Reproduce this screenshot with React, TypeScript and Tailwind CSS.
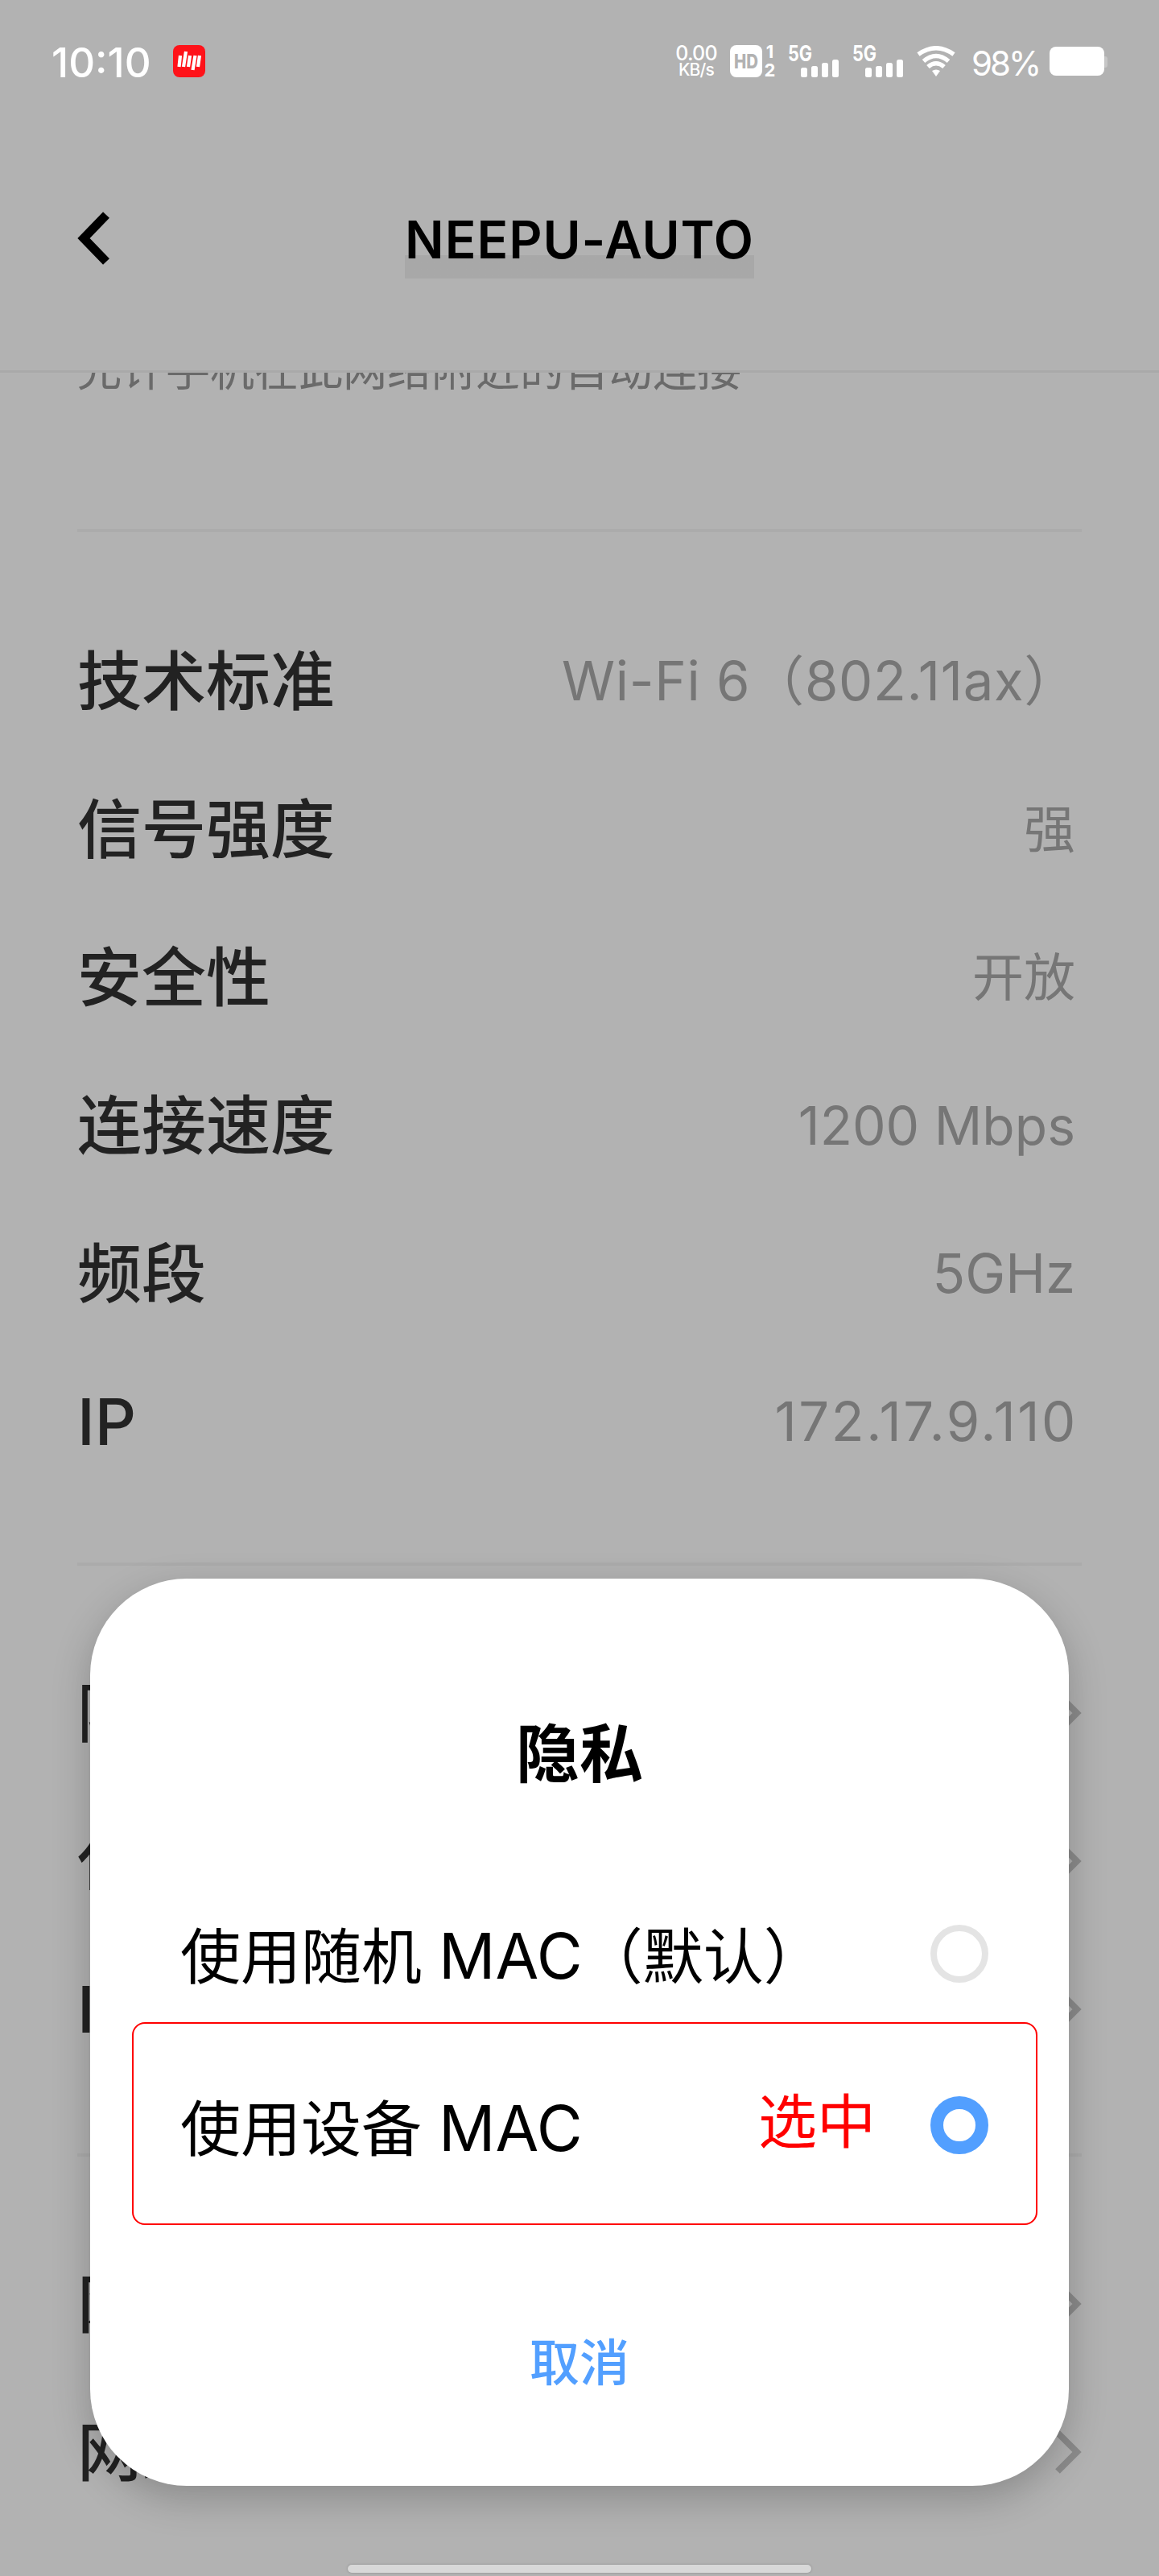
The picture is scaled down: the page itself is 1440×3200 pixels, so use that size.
import { ReactNode } from 'react'

const details = [
  { label: '技术标准', value: 'Wi-Fi 6（802.11ax）', className: '-mr-1 text-[67px] tracking-[0.7px]' },
  { label: '信号强度', value: '强', className: 'text-[64px]' },
  { label: '安全性', value: '开放', className: 'text-[64px]' },
  { label: '连接速度', value: '1200 Mbps', className: 'text-[66px]' },
  { label: '频段', value: '5GHz', className: 'text-[67px]' },
  { label: 'IP', value: '172.17.9.110', className: '-mr-[3px] text-[67px] tracking-[2.6px]' },
]

export default function App() {
  return (
    <div className="relative flex h-[3200px] w-[1440px] flex-col overflow-hidden bg-[#b2b2b2] font-[Inter,'Noto_Sans_CJK_SC',sans-serif] text-[#222]">
      <StatusBar />
      <header className="flex h-[311px] items-center border-b-[3px] border-[#a9a9a9] px-24 pb-[20px]">
        <svg viewBox="0 0 40 66" className="h-[66px] w-10 text-black" fill="none" stroke="currentColor" strokeWidth="11">
          <path d="M36 4L8 33l28 29" />
        </svg>
        <h1 className="flex flex-1 justify-center pt-1 pr-10 text-[64px] leading-[96px] font-semibold tracking-[1px] text-black">
          <span className="bg-linear-to-b from-transparent from-70% to-[#a8a8a8] to-70%">NEEPU-AUTO</span>
        </h1>
      </header>
      <main className="flex flex-col overflow-hidden px-24">
        <div className="h-[194px] shrink-0">
          <p className="-mt-[44px] text-[55px] leading-[80px] text-[#6a6a6a]">允许手机在此网络附近的自动连接</p>
        </div>
        <Divider />
        <section className="flex h-[1280px] shrink-0 flex-col pt-[93px]">
          {details.map((row) => (
            <div key={row.label} className="flex h-[184px] items-center justify-between pr-2">
              <Label>{row.label}</Label>
              <span className={`text-[#767676] ${row.className}`}>{row.value}</span>
            </div>
          ))}
        </section>
        <Divider />
        <section className="flex h-[730px] shrink-0 flex-col pt-[91px]">
          <LinkRow label="隐私" />
          <LinkRow label="代理" />
          <LinkRow label="IP 设置" />
        </section>
        <Divider />
        <section className="flex shrink-0 flex-col pt-[91px]">
          <LinkRow label="网关" />
          <LinkRow label="网络掩码" />
        </section>
      </main>
      <PrivacyDialog />
      <div className="absolute top-[3186px] left-[432px] h-[10px] w-[576px] rounded-full bg-[#d8d8d8] shadow-[0_0_3px_#888]" />
    </div>
  )
}

function Divider() {
  return <hr className="h-1 shrink-0 border-0 bg-[#ababab]" />
}

function Label({ children }: { children: ReactNode }) {
  return <span className="text-[80px] font-medium">{children}</span>
}

function LinkRow({ label }: { label: string }) {
  return (
    <div className="flex h-[184px] items-center justify-between">
      <Label>{label}</Label>
      <svg viewBox="0 0 34 56" className="h-14 w-[34px] text-[#8b8b8b]" fill="none" stroke="currentColor" strokeWidth="8">
        <path d="M4 4l24 24L4 52" />
      </svg>
    </div>
  )
}

function PrivacyDialog() {
  return (
    <div className="absolute top-[1961px] left-[112px] flex h-[1127px] w-[1216px] flex-col rounded-[120px] bg-white px-[52px] pt-[162px] text-black shadow-[0_16px_48px_rgba(0,0,0,0.22)]">
      <h2 className="text-center text-[79px] leading-[112px] font-bold">隐私</h2>
      <div className="mt-[138px] mb-[31px] flex h-[108px] shrink-0 items-center justify-between pr-[48px] pl-[60px]">
        <span className="pt-1.5 text-[75px] leading-none whitespace-nowrap">
          使用随机 <span className="text-[78px]">MAC</span>（默认）
        </span>
        <span className="size-[72px] rounded-full border-8 border-[#e4e4e4]" />
      </div>
      <div className="flex h-[252px] w-[1125px] shrink-0 items-center rounded-[16px] border-2 border-[#ff0000] pr-[59px] pl-[58px]">
        <span className="pt-3 text-[75px] leading-none">
          使用设备 <span className="text-[78px]">MAC</span>
        </span>
        <span className="mr-[68px] ml-auto pb-1 text-[73px] text-[#ff0000]">选中</span>
        <span className="mt-1 size-[72px] rounded-full border-[16px] border-[#529fff]" />
      </div>
      <button className="mt-[122px] text-[62px] leading-[100px] font-medium text-[#529fff]">取消</button>
    </div>
  )
}

function StatusBar() {
  return (
    <div className="flex h-[152px] shrink-0 items-center pr-16 pl-16 text-white">
      <span className="w-[122px] pt-1 text-[51px] font-medium">10:10</span>
      <svg viewBox="0 0 40 40" className="ml-[29px] size-10">
        <rect width="40" height="40" rx="8" fill="#ff1219" />
        <path d="M9 13L7.500 27M16 8l-3 19M21 13l-2 14M27.500 13l-3 18M33 13l-2 14" stroke="#fff" strokeWidth="4.200" />
      </svg>
      <div className="ml-auto flex w-[54px] flex-col items-center">
        <span className="text-[25px] leading-[22px] font-medium tracking-[-0.8px]">0.00</span>
        <span className="text-[21px] leading-[20px] font-medium tracking-[-0.8px]">KB/s</span>
      </div>
      <svg viewBox="0 0 56 40" className="ml-[15px] h-10 w-14 overflow-visible" fill="none">
        <rect width="40" height="40" rx="8" fill="#fff" />
        <text x="5" y="29" textLength="30" lengthAdjust="spacingAndGlyphs" fontSize="24" fontWeight="800" fill="#b2b2b2">HD</text>
        <text x="49.500" y="16" textAnchor="middle" fontSize="22" fontWeight="700" fill="#fff">1</text>
        <text x="49.500" y="39" textAnchor="middle" fontSize="22" fontWeight="700" fill="#fff">2</text>
      </svg>
      <Signal />
      <Signal />
      <svg viewBox="0 0 48 38" className="ml-4 h-[38px] w-12" fill="none" stroke="#fff" strokeWidth="5.500">
        <path d="M2 10.500Q24-5 46 10.500M8.500 19Q24 6 39.500 19M14 26Q24 17.500 34 26" />
        <path d="M19 31q5-3 10 0L24 38z" fill="#fff" stroke="none" />
      </svg>
      <span className="ml-5 w-[84px] pt-1 text-[42px] tracking-[-3px]">98%</span>
      <svg viewBox="0 0 72 36" className="ml-[13px] h-9 w-[72px]">
        <rect x="66" y="12" width="6" height="14" rx="3" fill="#c6c6c6" />
        <rect width="68" height="36" rx="8" fill="#fff" />
      </svg>
    </div>
  )
}

function Signal() {
  return (
    <svg viewBox="0 0 64 40" className="ml-4 h-10 w-16 overflow-visible" fill="#fff">
      <text x="0" y="20" textLength="30" lengthAdjust="spacingAndGlyphs" fontSize="27" fontWeight="700">5G</text>
      <rect x="16" y="28" width="8" height="12" rx="2.500" />
      <rect x="29" y="26" width="8" height="14" rx="2.500" />
      <rect x="42" y="22" width="8" height="18" rx="2.500" />
      <rect x="55" y="18" width="8" height="22" rx="2.500" />
    </svg>
  )
}
